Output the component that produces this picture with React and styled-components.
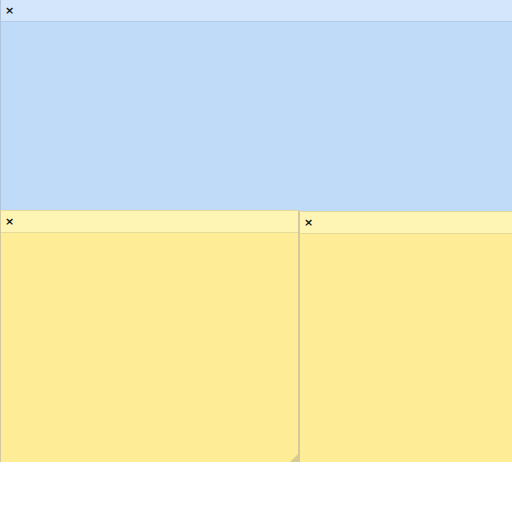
import React from "react";
import styled, { createGlobalStyle } from "styled-components";

const Global = createGlobalStyle`
  html, body { margin: 0; padding: 0; background: #ffffff; overflow: hidden; }
  body { font-family: "Liberation Sans", Arial, sans-serif; }
`;

const Board = styled.div`
  position: relative;
  width: 512px;
  height: 462px;
  overflow: hidden;
`;

const palette = {
  blue: { head: "#d4e6fc", body: "#bfdbf8", line: "#b3cbe6", edge: "#b0c4dc" },
  yellow: { head: "#fef5b4", body: "#feed96", line: "#e6da9a", edge: "#d2c99e" },
};

const Note = styled.div`
  position: absolute;
  left: ${(p) => p.$x}px;
  top: ${(p) => p.$y}px;
  width: ${(p) => p.$w}px;
  height: ${(p) => p.$h}px;
  display: flex;
  flex-direction: column;
  background: ${(p) => palette[p.$c].body};
  border-left: 1px solid ${(p) => palette[p.$c].edge};
  border-right: 1px solid ${(p) => palette[p.$c].edge};
  border-top: 1px solid ${(p) => palette[p.$c].line};
  box-sizing: border-box;
`;

const Header = styled.div`
  height: 21px;
  flex: none;
  display: flex;
  align-items: center;
  padding-left: 4px;
  background: ${(p) => palette[p.$c].head};
  border-bottom: 1px solid ${(p) => palette[p.$c].line};
`;

const Close = styled.span`
  font-family: "DejaVu Sans", sans-serif;
  font-size: 11px;
  font-weight: bold;
  line-height: 1;
  color: #111;
  margin-top: -1px;
`;

const Body = styled.div`
  flex: 1;
  position: relative;
`;

const Grip = styled.svg`
  position: absolute;
  right: 0;
  bottom: 0;
`;

function StickyNote({ c, x, y, w, h, grip }) {
  return (
    <Note $c={c} $x={x} $y={y} $w={w} $h={h}>
      <Header $c={c}>
        <Close>×</Close>
      </Header>
      <Body>
        {grip && (
          <Grip width="8" height="8" viewBox="0 0 8 8">
            <polygon points="8,0 8,8 0,8" fill="#d6cc8c" />
          </Grip>
        )}
      </Body>
    </Note>
  );
}

export default function App() {
  return (
    <>
      <Global />
      <Board>
        <StickyNote c="blue" x={0} y={-1} w={520} h={214} />
        <StickyNote c="yellow" x={0} y={210} w={299} h={252} grip />
        <StickyNote c="yellow" x={299} y={211} w={220} h={251} />
      </Board>
    </>
  );
}
